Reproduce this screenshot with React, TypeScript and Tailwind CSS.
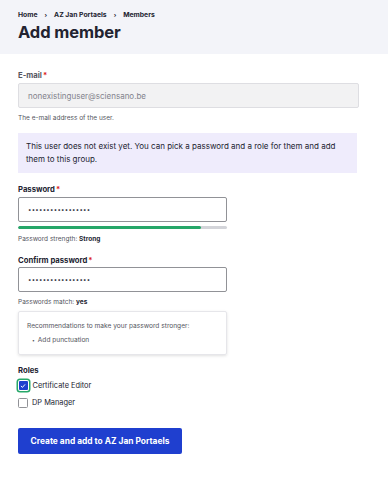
import React from 'react';

const Req = () => <span className="text-[#dc2323] ml-[1px]">*</span>;

const Label = ({ children, className = '' }: { children: React.ReactNode; className?: string }) => (
  <label className={`block text-[7.7px] font-bold leading-[10px] ${className}`}>{children}</label>
);

export default function App() {
  return (
    <div className="w-[388px] h-[480px] bg-white font-['Inter',sans-serif] text-[#222330] overflow-hidden">
      <div className="bg-[#f3f4f9] h-[54px] pl-[18px] pt-[10px]">
        <div className="flex items-center gap-[7px] text-[6.8px] font-bold text-[#222330] leading-[10px]">
          <span>Home</span>
          <span className="text-[6px]">›</span>
          <span>AZ Jan Portaels</span>
          <span className="text-[6px]">›</span>
          <span>Members</span>
        </div>
        <h1 className="text-[16.5px] font-bold leading-[20px] mt-[2px] tracking-[-0.1px]">Add member</h1>
      </div>

      <div className="px-[18px] pt-[17px]">
        <Label className="text-[#545560]">
          E-mail<Req />
        </Label>
        <div className="mt-[2px] w-[341px] h-[25px] bg-[#f2f2f3] border border-[#dedee2] rounded-[2px] flex items-center pl-[9px] text-[8px] text-[#82828c]">
          nonexistinguser@sciensano.be
        </div>
        <div className="mt-[5px] text-[6.5px] text-[#545560] leading-[10px]">The e-mail address of the user.</div>

        <div className="mt-[10px] w-[339px] h-[40px] bg-[#efecfc] px-[8px] pt-[7px] text-[8px] leading-[13px] text-[#222330]">
          This user does not exist yet. You can pick a password and a role for them and add them to this group.
        </div>

        <Label className="mt-[12px]">
          Password<Req />
        </Label>
        <div className="mt-[2px] w-[209px] h-[25px] bg-white border border-[#919297] rounded-[2px] flex items-center pl-[9px] text-[6px] tracking-[0.3px] text-[#222330]">
          •••••••••••••••••
        </div>
        <div className="mt-[4px] w-[209px] h-[3px] bg-[#d3d4d9] rounded-full overflow-hidden">
          <div className="h-full w-[183px] bg-[#26a769] rounded-full" />
        </div>
        <div className="mt-[5px] text-[6.5px] leading-[10px] text-[#545560]">
          Password strength: <span className="font-bold text-[#222330]">Strong</span>
        </div>

        <Label className="mt-[12px]">
          Confirm password<Req />
        </Label>
        <div className="mt-[1px] w-[209px] h-[25px] bg-white border border-[#919297] rounded-[2px] flex items-center pl-[9px] text-[6px] tracking-[0.3px] text-[#222330]">
          •••••••••••••••••
        </div>
        <div className="mt-[5px] text-[6.5px] leading-[10px] text-[#545560]">
          Passwords match: <span className="font-bold text-[#222330]">yes</span>
        </div>

        <div className="mt-[4px] w-[209px] h-[44px] border border-[#e6e6ea] rounded-[2px] shadow-[0_1px_3px_rgba(0,0,0,0.12)] px-[8px] pt-[9px] text-[6.6px] leading-[10px] text-[#545560]">
          <div>Recommendations to make your password stronger:</div>
          <div className="mt-[4px] pl-[5px] flex items-center gap-[3px]">
            <span className="text-[5px]">•</span>
            <span>Add punctuation</span>
          </div>
        </div>

        <Label className="mt-[11px]">Roles</Label>
        <div className="mt-[3px] flex items-center gap-[4px] h-[13px]">
          <div className="w-[11px] h-[11px] rounded-[2px] ring-[1.5px] ring-[#26a769] flex items-center justify-center -ml-[0.5px]">
            <div className="w-[9px] h-[9px] bg-[#1f3fcf] rounded-[1px] flex items-center justify-center">
              <svg width="6" height="6" viewBox="0 0 10 10">
                <path d="M2 5.3 L4.1 7.3 L8 2.8" stroke="white" strokeWidth="1.6" fill="none" strokeLinecap="round" strokeLinejoin="round" />
              </svg>
            </div>
          </div>
          <span className="text-[7.4px] text-[#222330]">Certificate Editor</span>
        </div>
        <div className="mt-[4px] flex items-center gap-[4px] h-[13px]">
          <div className="w-[10px] h-[10px] border border-[#919297] rounded-[1.5px] bg-white" />
          <span className="text-[7.4px] text-[#222330]">DP Manager</span>
        </div>

        <button className="mt-[19px] w-[164px] h-[26px] bg-[#1f3fcf] rounded-[2px] text-white text-[8.4px] font-bold">
          Create and add to AZ Jan Portaels
        </button>
      </div>
    </div>
  );
}
